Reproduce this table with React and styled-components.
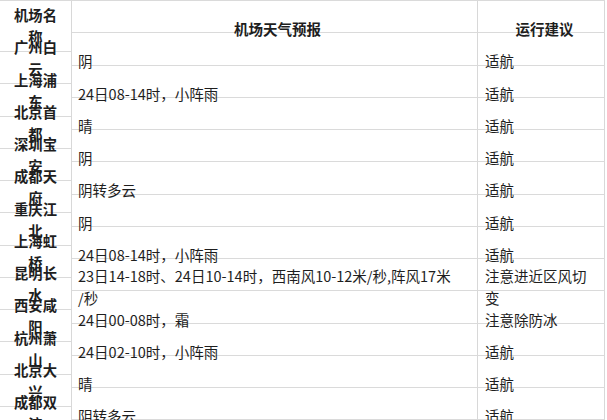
import React from "react";
import styled, { createGlobalStyle } from "styled-components";

const GlobalStyle = createGlobalStyle`
  html, body {
    margin: 0;
    padding: 0;
    background: #fff;
    overflow: hidden;
  }
  body {
    font-family: "Noto Sans CJK SC", "Noto Sans", sans-serif;
    color: #1e1e1e;
  }
`;

const Sheet = styled.div`
  display: grid;
  grid-template-columns: 72px 406px 127px;
  grid-auto-rows: 32.27px;
  width: 605px;
  border-top: 1px solid #dadada;
  box-sizing: border-box;
`;

const Cell = styled.div`
  box-sizing: border-box;
  display: flex;
  flex-direction: column;
  justify-content: center;
  padding: 25px ${(p) => (p.$kind === "name" ? "0" : "0 0 6px")};
  padding-left: ${(p) => (p.$kind === "advice" ? "7px" : p.$kind === "weather" ? "6px" : "0")};
  border-right: 1px solid #d8d8d8;
  border-bottom: 1px solid #dadada;
  overflow: visible;
  white-space: nowrap;
  font-size: ${(p) => (p.$kind === "name" ? "14.3px" : "14.5px")};
  font-weight: ${(p) => (p.$kind === "name" || p.$head ? 700 : 400)};
  text-align: ${(p) => (p.$kind === "name" || p.$head ? "center" : "left")};
  line-height: 22px;
`;

const Line = styled.span`
  display: block;
`;

const rows = [
  { name: ["机场名", "称"], weather: ["机场天气预报"], advice: ["运行建议"], head: true },
  { name: ["广州白", "云"], weather: ["阴"], advice: ["适航"] },
  { name: ["上海浦", "东"], weather: ["24日08-14时，小阵雨"], advice: ["适航"] },
  { name: ["北京首", "都"], weather: ["晴"], advice: ["适航"] },
  { name: ["深圳宝", "安"], weather: ["阴"], advice: ["适航"] },
  { name: ["成都天", "府"], weather: ["阴转多云"], advice: ["适航"] },
  { name: ["重庆江", "北"], weather: ["阴"], advice: ["适航"] },
  { name: ["上海虹", "桥"], weather: ["24日08-14时，小阵雨"], advice: ["适航"] },
  {
    name: ["昆明长", "水"],
    weather: ["23日14-18时、24日10-14时，西南风10-12米/秒,阵风17米", "/秒"],
    advice: ["注意进近区风切", "变"],
  },
  { name: ["西安咸", "阳"], weather: ["24日00-08时，霜"], advice: ["注意除防冰"] },
  { name: ["杭州萧", "山"], weather: ["24日02-10时，小阵雨"], advice: ["适航"] },
  { name: ["北京大", "兴"], weather: ["晴"], advice: ["适航"] },
  { name: ["成都双", "流"], weather: ["阴转多云"], advice: ["适航"] },
];

const Lines = ({ lines }) => lines.map((l, i) => <Line key={i}>{l}</Line>);

export default function App() {
  return (
    <>
      <GlobalStyle />
      <Sheet>
        {rows.map((r, i) => (
          <React.Fragment key={i}>
            <Cell $kind="name" $head={r.head}>
              <Lines lines={r.name} />
            </Cell>
            <Cell $kind="weather" $head={r.head}>
              <Lines lines={r.weather} />
            </Cell>
            <Cell $kind="advice" $head={r.head}>
              <Lines lines={r.advice} />
            </Cell>
          </React.Fragment>
        ))}
      </Sheet>
    </>
  );
}
